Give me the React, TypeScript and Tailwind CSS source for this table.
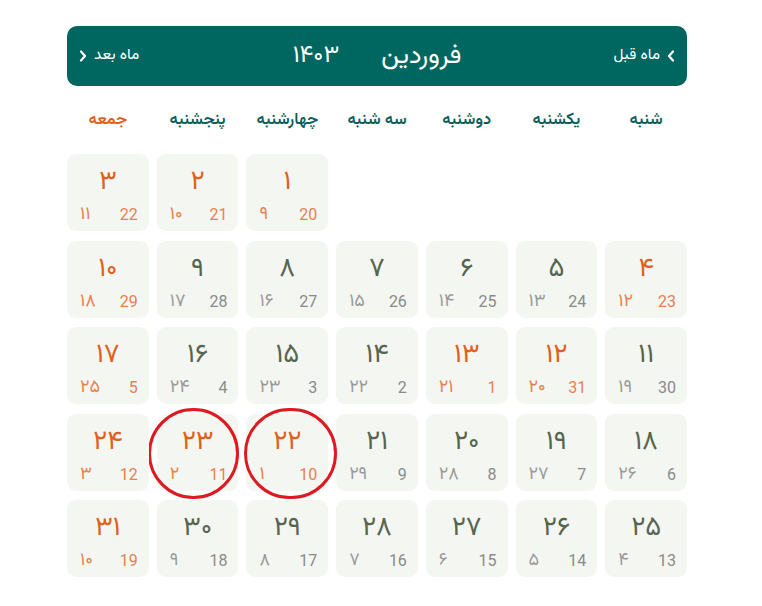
import React from "react";

const fa = (n: number | string) =>
  String(n).replace(/[0-9]/g, (d) => "۰۱۲۳۴۵۶۷۸۹"[Number(d)]);

const FONT = '"Vazirmatn", "Noto Sans Arabic", "DejaVu Sans", sans-serif';
const LAT = 'Roboto, "Open Sans", sans-serif';

const dayNames = ["شنبه", "یکشنبه", "دوشنبه", "سه شنبه", "چهارشنبه", "پنجشنبه", "جمعه"];

const holidays = new Set([1, 2, 3, 4, 10, 12, 13, 17, 22, 23, 24, 31]);

function greg(d: number) {
  const v = d + 19;
  return v <= 31 ? v : v - 31;
}
function hijri(d: number) {
  return d <= 21 ? d + 8 : d - 21;
}

function Chevron({ dir }: { dir: "left" | "right" }) {
  return (
    <svg width="8" height="12" viewBox="0 0 8 12" fill="none">
      <path
        d={dir === "left" ? "M6 1.5 L2 6 L6 10.5" : "M2 1.5 L6 6 L2 10.5"}
        stroke="white"
        strokeWidth="2.2"
        strokeLinecap="round"
        strokeLinejoin="round"
      />
    </svg>
  );
}

function Cell({ d }: { d: number }) {
  const h = holidays.has(d);
  return (
    <div className="relative h-[77px] rounded-[9px] bg-[#f4f6f2] flex flex-col items-center">
      <div
        className={`mt-[13px] text-[27px] leading-[32px] ${h ? "text-[#e0601c]" : "text-[#56654f]"}`}
        style={{ fontFamily: FONT }}
      >
        {fa(d)}
      </div>
      <div className="mt-[6px] w-full flex flex-row-reverse justify-between items-center pl-[13px] pr-[11px]" dir="ltr">
        <span
          className={`text-[16px] leading-[20px] ${h ? "text-[#e8804f]" : "text-[#8a8a8a]"}`}
          style={{ fontFamily: LAT }}
        >
          {greg(d)}
        </span>
        <span
          className={`text-[18px] leading-[20px] ${h ? "text-[#e8804f]" : "text-[#9a9a9a]"}`}
          style={{ fontFamily: FONT }}
        >
          {fa(hijri(d))}
        </span>
      </div>
      {d === 23 && (
        <div className="absolute left-[-9px] top-[-6px] w-[91px] h-[91px] rounded-full border-[3px] border-[#dd1a1f]" />
      )}
      {d === 22 && (
        <div className="absolute left-[-2px] top-[-6px] w-[93px] h-[91px] rounded-full border-[3px] border-[#dd1a1f]" />
      )}
    </div>
  );
}

export default function App() {
  const cells: (number | null)[] = [null, null, null, null];
  for (let i = 1; i <= 31; i++) cells.push(i);
  return (
    <div className="w-[762px] h-[606px] bg-white" style={{ fontFamily: FONT }}>
      <div className="ml-[67px] w-[620px] pt-[26px]">
        <div dir="rtl" className="h-[60px] rounded-[10px] bg-[#006660] flex items-center justify-between pr-[12px] pl-[12px] text-white relative">
          <div className="flex items-center gap-[7px] text-[15.5px]">
            <Chevron dir="left" />
            <span>ماه قبل</span>
          </div>
          <div className="absolute inset-0 flex items-center justify-center gap-[42px] pointer-events-none">
            <span className="text-[26px]">فروردین</span>
            <span className="text-[24px]">{fa(1403)}</span>
          </div>
          <div className="flex items-center gap-[7px] text-[15.5px]">
            <span>ماه بعد</span>
            <Chevron dir="right" />
          </div>
        </div>
        <div dir="rtl" className="grid grid-cols-7 gap-x-[8px] mt-[22px] h-[24px] items-center">
          {dayNames.map((n, i) => (
            <div
              key={n}
              className={`text-center text-[16.5px] font-semibold ${i === 6 ? "text-[#e0601c]" : "text-[#0d5e5a]"}`}
            >
              {n}
            </div>
          ))}
        </div>
        <div dir="rtl" className="grid grid-cols-7 gap-x-[8px] gap-y-[9.5px] mt-[22px]">
          {cells.map((d, i) => (d === null ? <div key={i} /> : <Cell key={i} d={d} />))}
        </div>
      </div>
    </div>
  );
}
